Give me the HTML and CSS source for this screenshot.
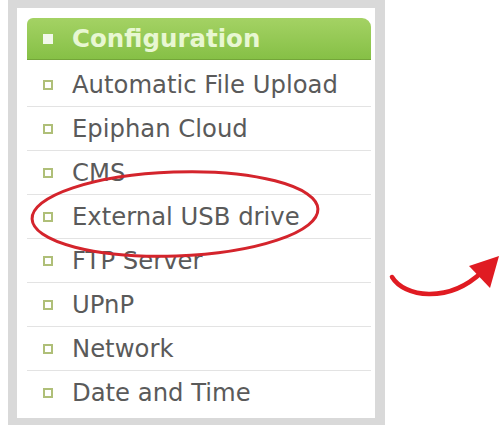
FILE: index.html
```html
<!DOCTYPE html>
<html>
<head>
<meta charset="utf-8">
<link rel="stylesheet" href="styles.css">
</head>
<body>
<div class="frame">
  <div class="panel">
    <div class="header"><span class="hbullet"></span><span class="htext">Configuration</span></div>
    <ul class="menu">
      <li><span class="bullet"></span>Automatic File Upload</li>
      <li><span class="bullet"></span>Epiphan Cloud</li>
      <li><span class="bullet"></span>CMS</li>
      <li><span class="bullet"></span>External USB drive</li>
      <li><span class="bullet"></span>FTP Server</li>
      <li><span class="bullet"></span>UPnP</li>
      <li><span class="bullet"></span>Network</li>
      <li><span class="bullet"></span>Date and Time</li>
    </ul>
  </div>
</div>
<svg class="annot" width="501" height="426" viewBox="0 0 501 426">
  <ellipse cx="175" cy="214" rx="143" ry="42" transform="rotate(-2 175 214)" fill="none" stroke="#d4242c" stroke-width="3"/>
  <path d="M392 277 C 404 297, 448 304, 482 272" fill="none" stroke="#e01b22" stroke-width="4.5" stroke-linecap="round"/>
  <polygon points="469,266 499,256 490,288" fill="#e01b22"/>
</svg>
</body>
</html>
```
FILE: styles.css
```css
html, body {
  margin: 0;
  padding: 0;
}
body {
  width: 501px;
  height: 426px;
  background: #fff;
  overflow: hidden;
  position: relative;
  font-family: "DejaVu Sans", Verdana, sans-serif;
}
.frame {
  margin-left: 8px;
  width: 377px;
  box-sizing: border-box;
  border-style: solid;
  border-color: #d9d9d9;
  border-width: 8px 10px 7px 9px;
  background: #fff;
}
.panel {
  padding: 10px 4px 4px 10px;
}
.header {
  height: 42px;
  box-sizing: border-box;
  display: flex;
  align-items: center;
  gap: 19px;
  padding-left: 16px;
  border-radius: 6px 9px 0 0;
  background: linear-gradient(#a4d264, #86c046);
  border-bottom: 1px solid #74a53a;
  color: #e8f7d2;
  font-weight: bold;
  font-size: 24.5px;
}
.hbullet {
  width: 10px;
  height: 10px;
  background: #f2f8ea;
  flex: none;
}
.menu {
  list-style: none;
  margin: 3px 0 0 0;
  padding: 0;
}
.menu li {
  height: 44px;
  box-sizing: border-box;
  border-bottom: 1px solid #e3e3e3;
  display: flex;
  align-items: center;
  gap: 19px;
  padding-left: 16px;
  color: #5a5a5a;
  font-size: 24.3px;
}
.menu li:last-child {
  border-bottom: none;
  height: 43px;
}
.bullet {
  width: 10px;
  height: 10px;
  box-sizing: border-box;
  border: 2px solid #afbf78;
  background: #fff;
  flex: none;
}
.annot {
  position: absolute;
  left: 0;
  top: 0;
}
```
